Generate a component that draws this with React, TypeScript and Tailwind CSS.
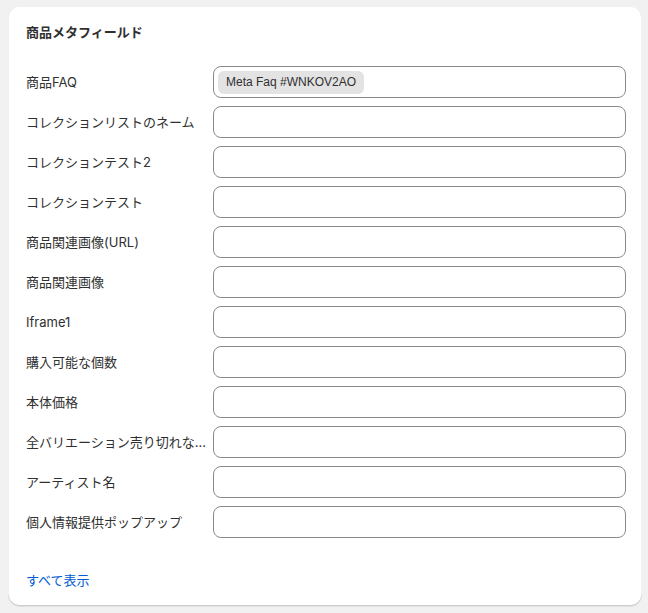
import React from "react";

const fields = [
  { label: "商品FAQ", value: "Meta Faq #WNKOV2AO" },
  { label: "コレクションリストのネーム" },
  { label: "コレクションテスト2" },
  { label: "コレクションテスト" },
  { label: "商品関連画像(URL)" },
  { label: "商品関連画像" },
  { label: "Iframe1" },
  { label: "購入可能な個数" },
  { label: "本体価格" },
  { label: "全バリエーション売り切れな..." },
  { label: "アーティスト名" },
  { label: "個人情報提供ポップアップ" },
];

export default function App() {
  return (
    <div
      className="min-h-[613px] bg-[#f1f1f1] pt-[6px] pb-[7px] text-[13px] text-[#303030]"
      style={{ fontFamily: '"Inter", "Noto Sans CJK JP", sans-serif' }}
    >
      <div className="ml-[8px] w-[634px] rounded-[12px] bg-white pl-[18px] pr-4 pt-4 pb-4 shadow-[0_1px_0_0_rgba(26,26,26,0.07),inset_0_-1px_0_0_#cccccc,inset_0_0_0_1px_rgba(0,0,0,0.06)]">
        <h2 className="text-[13px] font-semibold leading-5">商品メタフィールド</h2>

        <div className="mt-6 flex flex-col gap-2">
          {fields.map((f) => (
            <div key={f.label} className="flex items-center gap-[7px]">
              <div className="w-[180px] shrink-0 whitespace-nowrap leading-5">{f.label}</div>
              <div className="flex h-8 flex-1 items-center rounded-[8px] border border-[#8a8a8a] px-1">
                {f.value && (
                  <span className="flex h-[23px] items-center rounded-[6px] bg-[#e3e3e3] px-2 font-['Liberation_Sans',sans-serif] text-[12px] text-[#303030]">
                    {f.value}
                  </span>
                )}
              </div>
            </div>
          ))}
        </div>

        <a href="#" className="mt-8 block leading-5 text-[#005bd3]">
          すべて表示
        </a>
      </div>
    </div>
  );
}
